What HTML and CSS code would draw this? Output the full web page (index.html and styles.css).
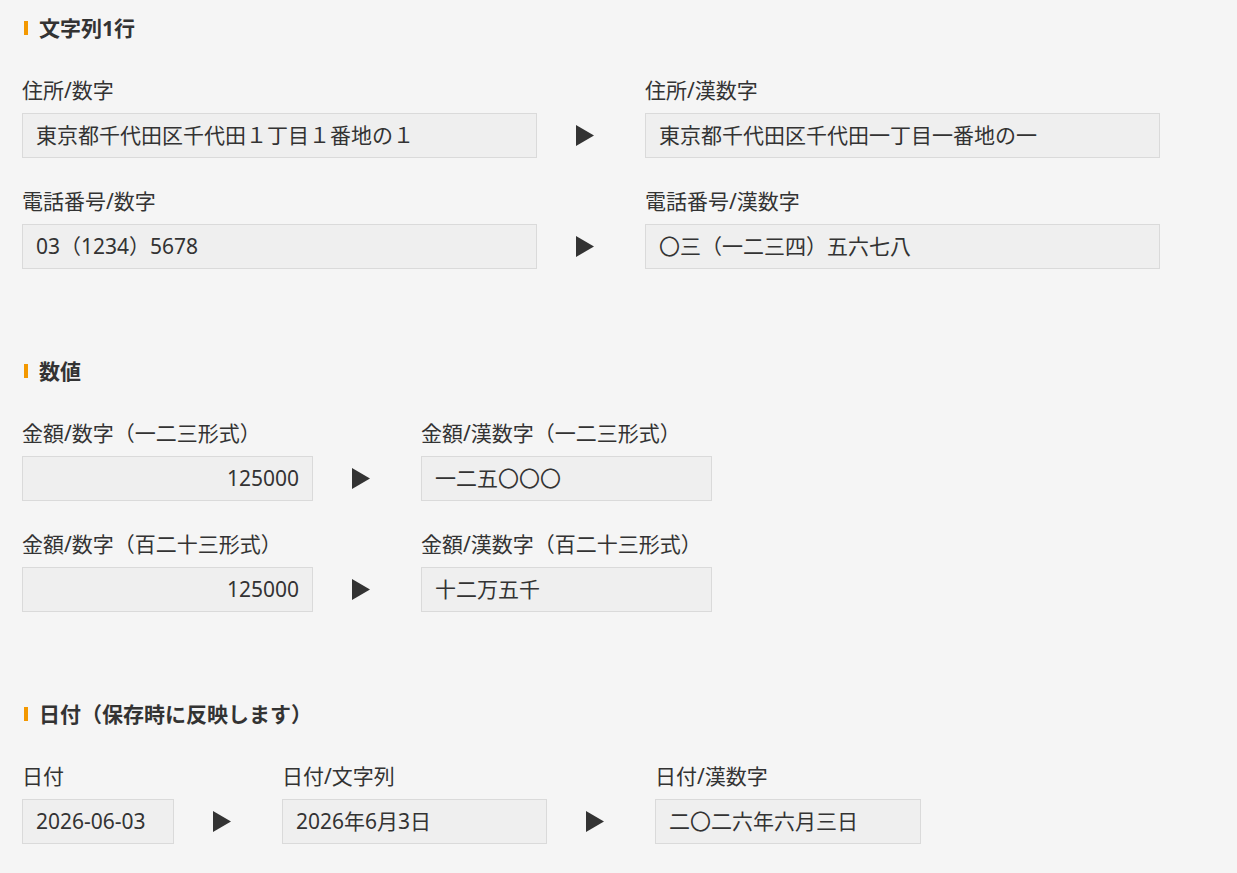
FILE: index.html
```html
<!DOCTYPE html>
<html lang="ja">
<head>
<meta charset="utf-8">
<title>漢数字変換</title>
<link rel="stylesheet" href="styles.css">
</head>
<body>
<main class="page">
  <section class="sec">
    <h2 class="sec-title">文字列1行</h2>
    <div class="row">
      <div class="field"><div class="lbl">住所/数字</div><div class="box w-wide">東京都千代田区千代田１丁目１番地の１</div></div>
      <div class="arrow"><svg width="18" height="21" viewBox="0 0 18 21"><polygon points="0,0 18,10.5 0,21" fill="#333"/></svg></div>
      <div class="field"><div class="lbl">住所/漢数字</div><div class="box w-wide">東京都千代田区千代田一丁目一番地の一</div></div>
    </div>
    <div class="row">
      <div class="field"><div class="lbl">電話番号/数字</div><div class="box w-wide">03（1234）5678</div></div>
      <div class="arrow"><svg width="18" height="21" viewBox="0 0 18 21"><polygon points="0,0 18,10.5 0,21" fill="#333"/></svg></div>
      <div class="field"><div class="lbl">電話番号/漢数字</div><div class="box w-wide">〇三（一二三四）五六七八</div></div>
    </div>
  </section>

  <section class="sec">
    <h2 class="sec-title">数値</h2>
    <div class="row">
      <div class="field"><div class="lbl">金額/数字（一二三形式）</div><div class="box w-num num">125000</div></div>
      <div class="arrow"><svg width="18" height="21" viewBox="0 0 18 21"><polygon points="0,0 18,10.5 0,21" fill="#333"/></svg></div>
      <div class="field"><div class="lbl">金額/漢数字（一二三形式）</div><div class="box w-num">一二五〇〇〇</div></div>
    </div>
    <div class="row">
      <div class="field"><div class="lbl">金額/数字（百二十三形式）</div><div class="box w-num num">125000</div></div>
      <div class="arrow"><svg width="18" height="21" viewBox="0 0 18 21"><polygon points="0,0 18,10.5 0,21" fill="#333"/></svg></div>
      <div class="field"><div class="lbl">金額/漢数字（百二十三形式）</div><div class="box w-num">十二万五千</div></div>
    </div>
  </section>

  <section class="sec">
    <h2 class="sec-title">日付（保存時に反映します）</h2>
    <div class="row">
      <div class="field"><div class="lbl">日付</div><div class="box w-date">2026-06-03</div></div>
      <div class="arrow"><svg width="18" height="21" viewBox="0 0 18 21"><polygon points="0,0 18,10.5 0,21" fill="#333"/></svg></div>
      <div class="field"><div class="lbl">日付/文字列</div><div class="box w-datestr">2026年6月3日</div></div>
      <div class="arrow"><svg width="18" height="21" viewBox="0 0 18 21"><polygon points="0,0 18,10.5 0,21" fill="#333"/></svg></div>
      <div class="field"><div class="lbl">日付/漢数字</div><div class="box w-datekan">二〇二六年六月三日</div></div>
    </div>
  </section>
</main>
</body>
</html>
```

FILE: styles.css
```css
html, body {
  margin: 0;
  padding: 0;
  background: #f5f5f5;
}
body {
  font-family: "Noto Sans", "Noto Sans CJK JP", sans-serif;
  color: #333;
  font-size: 21px;
}
.page {
  padding: 13px 22px 20px;
}
.sec + .sec {
  margin-top: 87px;
}
.sec-title {
  display: flex;
  align-items: center;
  margin: 0 0 32px;
  height: 30px;
  line-height: 30px;
  font-size: 21px;
  font-weight: 700;
  color: #333;
}
.sec-title::before {
  content: "";
  display: block;
  width: 4px;
  height: 14px;
  margin-left: 2px;
  margin-right: 11px;
  background: #f39800;
}
.row {
  display: flex;
  align-items: flex-end;
}
.row + .row {
  margin-top: 28px;
}
.lbl {
  height: 30px;
  line-height: 30px;
  margin-bottom: 8px;
  font-size: 21px;
  white-space: nowrap;
}
.box {
  box-sizing: border-box;
  height: 45px;
  line-height: 43px;
  padding: 0 13px;
  border: 1px solid #dadada;
  background: #efefef;
  font-size: 21px;
  white-space: nowrap;
  overflow: hidden;
}
.num { text-align: right; }
.w-wide { width: 515px; }
.w-num { width: 291px; }
.w-date { width: 152px; }
.w-datestr { width: 265px; }
.w-datekan { width: 266px; }
.arrow {
  display: flex;
  align-items: center;
  height: 45px;
  margin: 0 51px 0 39px;
}
.arrow svg { display: block; }
```
